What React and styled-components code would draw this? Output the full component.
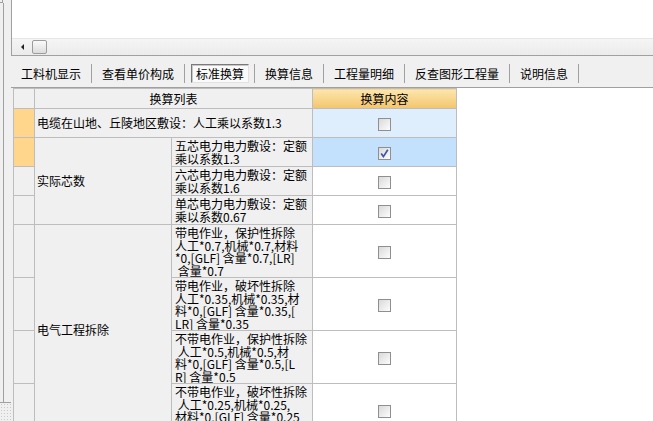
import React from "react";
import styled, { createGlobalStyle } from "styled-components";

const GlobalStyle = createGlobalStyle`
  html, body {
    margin: 0;
    padding: 0;
  }
  body {
    font-family: "Noto Sans CJK SC", "Liberation Sans", sans-serif;
    font-size: 12px;
    color: #000;
    background: #f0f0f0;
  }
`;

const Window = styled.div`
  width: 653px;
  height: 421px;
  display: flex;
  overflow: hidden;
  background: #f0f0f0;
`;

// narrow collapsed pane on the left
const SideStrip = styled.div`
  width: 11px;
  flex: none;
  display: flex;
  flex-direction: column;
`;

const SideCorner = styled.div`
  width: 3px;
  height: 3px;
  box-sizing: border-box;
  border-right: 1px solid #a0a0a0;
  border-bottom: 1px solid #a0a0a0;
`;

const SideFrame = styled.div`
  height: 399px;
  border-bottom: 1px solid #a0a0a0;
  padding-left: 3px;
`;

const SideLine = styled.div`
  height: 100%;
  border-left: 1px solid #a0a0a0;
`;

const Grip = styled.div`
  flex: 1;
  background-image: radial-gradient(#c9c9c9 0.7px, transparent 0.8px);
  background-size: 3px 3px;
`;

const Main = styled.div`
  flex: 1;
  display: flex;
  flex-direction: column;
  min-width: 0;
`;

const TopPanel = styled.div`
  height: 56px;
  box-sizing: border-box;
  border-left: 1px solid #a0a0a0;
  border-bottom: 1px solid #a0a0a0;
  display: flex;
  flex-direction: column;
`;

const Blank = styled.div`
  height: 38px;
  background: #fff;
`;

const ScrollBar = styled.div`
  flex: 1;
  display: flex;
  align-items: center;
  padding-left: 9px;
  background: linear-gradient(#f5f5f5, #ebebeb);
  border-top: 1px solid #e6e6e6;
`;

const Arrow = styled.div`
  width: 0;
  height: 0;
  border-top: 3px solid transparent;
  border-bottom: 3px solid transparent;
  border-right: 3px solid #222;
`;

const Thumb = styled.div`
  width: 15px;
  height: 14px;
  margin-left: 8px;
  box-sizing: border-box;
  border: 1px solid #9c9c9c;
  border-radius: 2px;
  background: linear-gradient(#fafafa, #dcdcdc);
`;

const TabBar = styled.div`
  height: 32px;
  box-sizing: border-box;
  border-bottom: 1px solid #a0a0a0;
  display: flex;
  align-items: center;
  padding-top: 3px;
`;

const Tab = styled.div`
  padding: ${(p) => (p.$active ? "0 5px 0 6px" : "0 10px")};
  line-height: 19px;
  height: 19px;
  border-right: 1px solid #a0a0a0;
  white-space: nowrap;
`;

const ActiveBox = styled.div`
  padding: 0 4px;
  height: 19px;
  line-height: 17px;
  box-sizing: border-box;
  background: #fafafa;
  border: 1px solid;
  border-color: #7a7a7a #e2e2e2 #e2e2e2 #7a7a7a;
  box-shadow: inset 1px 1px 0 #c8c8c8;
`;

const TableArea = styled.div`
  flex: 1;
  margin-left: 2px;
  background: #fff;
  overflow: hidden;
`;

const Grid = styled.table`
  border-collapse: collapse;
  table-layout: fixed;
  width: 443px;
`;

const Row = styled.tr`
  height: ${(p) => p.$h}px;
`;

const HeadCell = styled.th`
  border: 1px solid #bdbdbd;
  padding: 0;
  font-weight: normal;
  text-align: center;
  line-height: 18px;
  background: ${(p) =>
    p.$accent ? "linear-gradient(#fde6ae, #f3c56c)" : "#f0f0f0"};
`;

const RowHead = styled.td`
  border: 1px solid #bdbdbd;
  padding: 0;
  background: ${(p) => (p.$selected ? "#ffd68c" : "#f0f0f0")};
`;

const NameCell = styled.td`
  border: 1px solid #bdbdbd;
  padding: 0 0 0 ${(p) => (p.$sub ? 3 : 2)}px;
  background: #f0f0f0;
  vertical-align: ${(p) => (p.$sub ? "top" : "middle")};
  white-space: pre;
  overflow: hidden;
  line-height: 12.5px;
`;

const SubText = styled.div`
  padding-top: ${(p) => p.$pad}px;
`;

const CheckCell = styled.td`
  border: 1px solid #bdbdbd;
  padding: 0;
  text-align: center;
  vertical-align: middle;
  background: ${(p) =>
    p.$tone === "active" ? "#c3e0fc" : p.$tone === "light" ? "#dfeefd" : "#fff"};
`;

const Box = styled.span`
  display: inline-block;
  width: 13px;
  height: 13px;
  box-sizing: border-box;
  border: 1px solid #8f8f8f;
  background: linear-gradient(135deg, #d9d9d9, #fdfdfd);
  vertical-align: middle;
  position: relative;
  top: -1px;
`;

const CheckBox = ({ checked }) => (
  <Box>
    {checked && (
      <svg width="11" height="11" viewBox="0 0 11 11" style={{ display: "block" }}>
        <path d="M2.2 5.6 L4.4 8.6 L8.8 1.8" fill="none" stroke="#3b56a8" strokeWidth="1.7" />
      </svg>
    )}
  </Box>
);

const tabs = ["工料机显示", "查看单价构成", "标准换算", "换算信息", "工程量明细", "反查图形工程量", "说明信息"];

const groups = [
  {
    name: "实际芯数",
    height: 29,
    pad: 2,
    items: [
      { lines: ["五芯电力电力敷设：定额", "乘以系数1.3"], selected: true, checked: true },
      { lines: ["六芯电力电力敷设：定额", "乘以系数1.6"] },
      { lines: ["单芯电力电力敷设：定额", "乘以系数0.67"] },
    ],
  },
  {
    name: "电气工程拆除",
    height: 53,
    pad: 2,
    items: [
      { lines: ["带电作业，保护性拆除", "人工*0.7,机械*0.7,材料", "*0,[GLF] 含量*0.7,[LR]", " 含量*0.7"] },
      { lines: ["带电作业，破坏性拆除", "人工*0.35,机械*0.35,材", "料*0,[GLF] 含量*0.35,[", "LR] 含量*0.35"] },
      { lines: ["不带电作业，保护性拆除", " 人工*0.5,机械*0.5,材", "料*0,[GLF] 含量*0.5,[L", "R] 含量*0.5"] },
      { lines: ["不带电作业，破坏性拆除", " 人工*0.25,机械*0.25,", "材料*0,[GLF] 含量*0.25", ",[LR] 含量*0.25"] },
    ],
  },
];

const App = () => {
  return (
    <>
      <GlobalStyle />
      <Window>
        <SideStrip>
          <SideCorner />
          <SideFrame>
            <SideLine />
          </SideFrame>
          <Grip />
        </SideStrip>

        <Main>
          <TopPanel>
            <Blank />
            <ScrollBar>
              <Arrow />
              <Thumb />
            </ScrollBar>
          </TopPanel>

          <TabBar>
            {tabs.map((t) =>
              t === "标准换算" ? (
                <Tab key={t} $active>
                  <ActiveBox>{t}</ActiveBox>
                </Tab>
              ) : (
                <Tab key={t}>{t}</Tab>
              )
            )}
          </TabBar>

          <TableArea>
            <Grid>
              <colgroup>
                <col style={{ width: 21 }} />
                <col style={{ width: 137 }} />
                <col style={{ width: 141 }} />
                <col style={{ width: 144 }} />
              </colgroup>
              <tbody>
                <Row $h={20}>
                  <HeadCell />
                  <HeadCell colSpan={2}>换算列表</HeadCell>
                  <HeadCell $accent>换算内容</HeadCell>
                </Row>
                <Row $h={29}>
                  <RowHead $selected />
                  <NameCell colSpan={2}>电缆在山地、丘陵地区敷设：人工乘以系数1.3</NameCell>
                  <CheckCell $tone="light">
                    <CheckBox />
                  </CheckCell>
                </Row>
                {groups.map((g) =>
                  g.items.map((item, i) => (
                    <Row key={g.name + i} $h={g.height}>
                      <RowHead $selected={item.selected} />
                      {i === 0 && <NameCell rowSpan={g.items.length}>{g.name}</NameCell>}
                      <NameCell $sub>
                        <SubText $pad={g.pad}>{item.lines.join("\n")}</SubText>
                      </NameCell>
                      <CheckCell $tone={item.selected ? "active" : undefined}>
                        <CheckBox checked={item.checked} />
                      </CheckCell>
                    </Row>
                  ))
                )}
              </tbody>
            </Grid>
          </TableArea>
        </Main>
      </Window>
    </>
  );
};

export default App;
